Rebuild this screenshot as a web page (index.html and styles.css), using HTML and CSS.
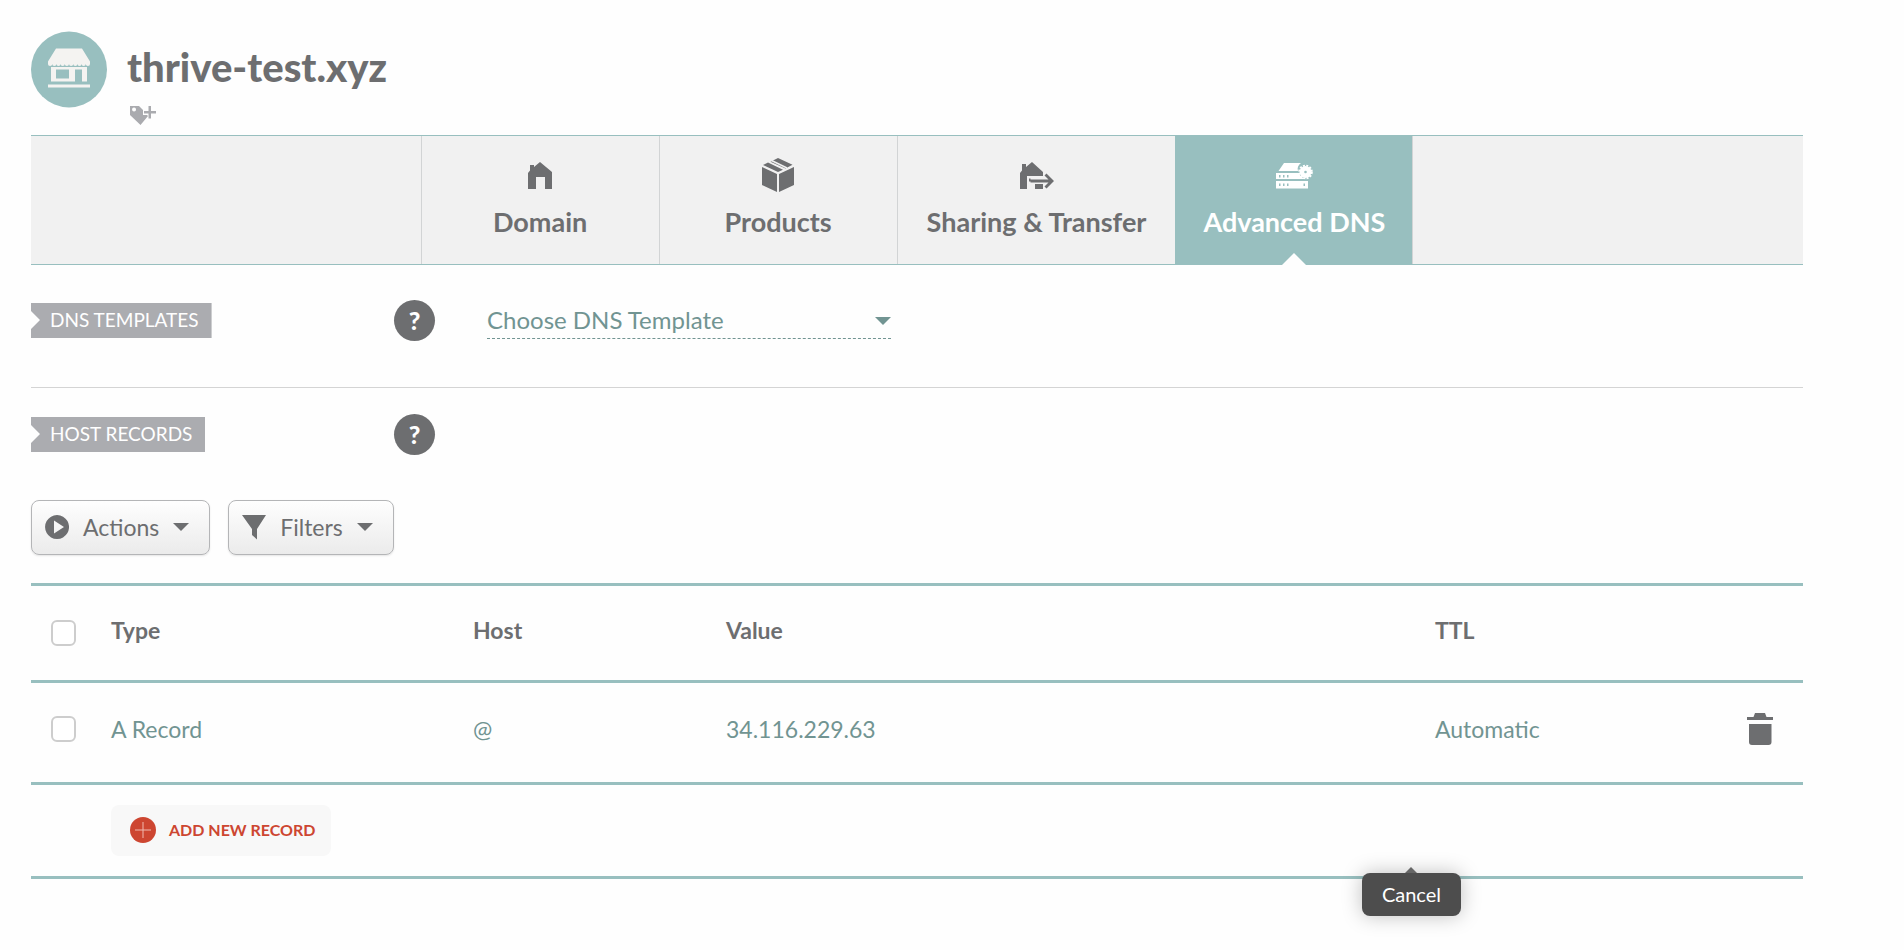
FILE: index.html
```html
<!DOCTYPE html>
<html lang="en">
<head>
    <meta charset="UTF-8">
    <meta name="viewport" content="width=device-width, initial-scale=1.0">
    <title>Advanced DNS - thrive-test.xyz</title>
    <link rel="stylesheet" href="styles.css">
</head>
<body>
    <main class="page">
        <header class="domain-header">
            <svg class="avatar" viewBox="0 0 76 76" aria-hidden="true">
                <circle cx="38" cy="38" r="38" fill="#98bfbf"/>
                <g fill="#f4f3f1">
                    <path d="M25 17h26l8 13v2.500a2 2 0 0 1-4.200 0a2 2 0 0 1-4.200 0a2 2 0 0 1-4.200 0a2 2 0 0 1-4.200 0a2 2 0 0 1-4.200 0a2 2 0 0 1-4.200 0a2 2 0 0 1-4.200 0a2 2 0 0 1-4.200 0a2 2 0 0 1-4.200 0a2 2 0 0 1-4.200 0V30z"/>
                    <path fill-rule="evenodd" d="M20 35.500h36V50h-5V38h-7v12H20zM25 38v9h13v-9z"/>
                    <path d="M17 53h42v3H17z"/>
                </g>
            </svg>
            <div class="domain-info">
                <h1>thrive-test.xyz</h1>
                <button class="tag-button" type="button" aria-label="Add tag">
                    <svg width="26" height="20" viewBox="0 0 26 20">
                        <path fill="#aaabaf" fill-rule="evenodd" d="M0 1h9l4 4v5h4l1 1-7.500 9L0 10zM4 2.500a2 2 0 1 0 .1 4a2 2 0 0 0-.1-4z"/>
                        <path fill="#aaabaf" d="M18.500 1h2.500v5h5v2.500h-5v5h-2.500v-5H14V6h4.500z"/>
                    </svg>
                </button>
            </div>
        </header>

        <nav class="tabs">
            <a class="tab" href="#domain">
                <svg width="24" height="34" viewBox="0 0 24 34" fill="currentColor">
                    <path d="M0 15l2-2.500V7h4v2l6-5 12 10v17h-7V19H8v12H0z"/>
                </svg>
                <span>Domain</span>
            </a>
            <a class="tab" href="#products">
                <svg width="32" height="34" viewBox="0 0 32 34" fill="currentColor">
                    <path d="M0 9l15 7v18L0 27zM32 9l-15 7v18l15-7zM1 7l5-2.500 15 7.200-5 2.300zM8.500 3.800L16 0l14.500 6.700-7 3.800z"/>
                    <path d="M9.500 2.500l15.500 7.500" stroke="#f1f1f1" stroke-width="1.500"/>
                </svg>
                <span>Products</span>
            </a>
            <a class="tab" href="#sharing">
                <svg width="34" height="34" viewBox="0 0 34 34" fill="currentColor">
                    <path d="M0 15l2-2.500V6h4v3l6-5 11 10v4H7v13H0z"/>
                    <path d="M9 20.500h1.500v3H9zM15 26h8v5h-8zM10.500 21.500h18l-4-4 2-2L34 23l-7.500 7.500-2-2 4-4h-18z"/>
                </svg>
                <span>Sharing &amp; Transfer</span>
            </a>
            <a class="tab active" href="#dns" aria-current="page">
                <svg width="37" height="34" viewBox="0 0 37 34" fill="currentColor">
                    <path d="M8 5h17c-3 2-4 5-3 8H2.500z"/>
                    <path fill-rule="evenodd" d="M0 15h23c1 3 3 5 7 6H0zM3 17v2.500h1.500V17zM7 17v2.500h1.500V17zM11 17v2.500h1.500V17z"/>
                    <path fill-rule="evenodd" d="M0 23h32v7.500H0zM3 25.500V28h1.500v-2.500zM7 25.500V28h1.500v-2.500zM11 25.500V28h1.500v-2.500zM27.500 25.500V28H29v-2.500z"/>
                    <circle cx="29.500" cy="14" r="6"/>
                    <circle cx="29.500" cy="14" r="6.400" fill="none" stroke="currentColor" stroke-width="1.800" stroke-dasharray="2 1.350"/>
                    <circle cx="29.500" cy="14" r="1.300" fill="#98bfbf"/>
                </svg>
                <span>Advanced DNS</span>
            </a>
        </nav>

        <section class="section">
            <h2 class="ribbon">DNS TEMPLATES</h2>
            <button class="help" type="button" aria-label="Help with DNS templates">?</button>
            <div class="template-select">
                <select aria-label="DNS template">
                    <option>Choose DNS Template</option>
                </select>
                <svg class="caret" width="16" height="8" viewBox="0 0 16 8" fill="currentColor"><path d="M0 0h16L8 8z"/></svg>
            </div>
        </section>

        <section class="section host-section">
            <h2 class="ribbon">HOST RECORDS</h2>
            <button class="help" type="button" aria-label="Help with host records">?</button>
        </section>

        <div class="toolbar">
            <button class="tool-button" type="button">
                <svg width="24" height="26" viewBox="0 0 24 26" fill="currentColor">
                    <path fill-rule="evenodd" d="M12 1a12 12 0 1 0 .1 0zM9 6.500v13l10-6.500z"/>
                </svg>
                Actions
                <svg class="caret" width="16" height="8" viewBox="0 0 16 8" fill="currentColor"><path d="M0 0h16L8 8z"/></svg>
            </button>
            <button class="tool-button" type="button">
                <svg width="24" height="26" viewBox="0 0 24 26" fill="currentColor">
                    <path d="M0 1h24l-9 14v10.500L10 21v-6z"/>
                </svg>
                Filters
                <svg class="caret" width="16" height="8" viewBox="0 0 16 8" fill="currentColor"><path d="M0 0h16L8 8z"/></svg>
            </button>
        </div>

        <div class="records">
            <table>
                <colgroup>
                    <col class="col-check">
                    <col class="col-type">
                    <col class="col-host">
                    <col class="col-value">
                    <col class="col-ttl">
                    <col class="col-remove">
                </colgroup>
                <thead>
                    <tr>
                        <th class="check"><input type="checkbox" aria-label="Select all records"></th>
                        <th>Type</th>
                        <th>Host</th>
                        <th>Value</th>
                        <th>TTL</th>
                        <td></td>
                    </tr>
                </thead>
                <tbody>
                    <tr>
                        <td class="check"><input type="checkbox" aria-label="Select A Record"></td>
                        <td>A Record</td>
                        <td>@</td>
                        <td>34.116.229.63</td>
                        <td>Automatic</td>
                        <td class="remove">
                            <button type="button" aria-label="Remove record">
                                <svg width="26" height="32" viewBox="0 0 26 32" fill="currentColor">
                                    <path d="M0 4h6.500l1.500-4h10l1.500 4H26v3H0zM2 11h22.500v18a3 3 0 0 1-3 3H5a3 3 0 0 1-3-3z"/>
                                </svg>
                            </button>
                        </td>
                    </tr>
                </tbody>
                <tfoot>
                    <tr>
                        <td></td>
                        <td colspan="5">
                            <button class="add-button" type="button">
                                <svg width="26" height="26" viewBox="0 0 26 26">
                                    <circle cx="13" cy="13" r="13" fill="#cd4631"/>
                                    <path d="M13 5v16M5 13h16" stroke="#f0b9b0" stroke-width="1"/>
                                </svg>
                                <span>ADD NEW RECORD</span>
                            </button>
                        </td>
                    </tr>
                </tfoot>
            </table>
            <div class="tooltip" role="tooltip">Cancel</div>
        </div>
    </main>
</body>
</html>
```

FILE: styles.css
```css
* {
    box-sizing: border-box;
}

body {
    margin: 0;
    background-color: #fefefe;
    color: #6d6e70;
    font-family: Lato, 'Open Sans', sans-serif;
    font-size: 23px;
}

button,
select {
    font-family: inherit;
    font-size: inherit;
    color: inherit;
    cursor: pointer;
}

svg {
    display: block;
    flex: none;
}

.page {
    min-height: 100vh;
    padding: 31px 101px 60px 31px;
}

/* Domain name */
.domain-header {
    display: flex;
    align-items: flex-start;
    gap: 20px;
    height: 104px;
}

.avatar {
    width: 76px;
    height: 77px;
}

h1 {
    margin: 10px 0 12px;
    font-size: 40px;
    line-height: 52px;
    font-weight: 900;
}

.tag-button {
    display: block;
    margin-left: 3px;
    padding: 0;
    border: 0;
    background: none;
}

/* Tabs */
.tabs {
    display: flex;
    justify-content: center;
    height: 130px;
    background-color: #f1f1f1;
    border-top: 1px solid #98bfbf;
    border-bottom: 1px solid #98bfbf;
}

.tab {
    position: relative;
    display: flex;
    flex-direction: column;
    align-items: center;
    gap: 12px;
    min-width: 238px;
    padding: 22px 29px 0;
    border-left: 1px solid #d2d4d5;
    color: #6d6e70;
    font-size: 27px;
    line-height: 36px;
    font-weight: bold;
    text-decoration: none;
}

.tab.active {
    padding: 22px 20px 0;
    background-color: #98bfbf;
    border-right: 1px solid #d2d4d5;
    border-left-color: #98bfbf;
    color: white;
}

.tab.active::after {
    content: '';
    position: absolute;
    bottom: -1px;
    left: 50%;
    margin-left: -12px;
    border: 12px solid transparent;
    border-top: 0;
    border-bottom-color: #fefefe;
}

/* Sections */
.section {
    display: grid;
    grid-template-columns: 363px 93px 404px;
    align-items: start;
    justify-items: start;
    padding: 35px 0 46px;
    border-bottom: 1px solid #d4d4d4;
}

.host-section {
    padding: 26px 0 45px;
    border-bottom: 0;
}

.ribbon {
    margin: 3px 0 0;
    padding: 0 13px 2px 19px;
    background-color: #abacb0;
    clip-path: polygon(0 0, 100% 0, 100% 100%, 0 100%, 0 26px, 9px 17px, 0 8px);
    color: white;
    font-size: 19px;
    line-height: 33px;
    font-weight: normal;
}

.help {
    width: 41px;
    height: 41px;
    padding: 0;
    border: 0;
    border-radius: 50%;
    background-color: #6d6e70;
    color: white;
    font-size: 25px;
    font-weight: 900;
    line-height: 41px;
}

.template-select {
    position: relative;
    width: 100%;
    color: #719492;
    font-size: 24px;
}

.template-select select {
    display: block;
    width: 100%;
    height: 39px;
    padding: 0 24px 0 0;
    border: 0;
    border-bottom: 1px dashed #719492;
    appearance: none;
    background: none;
}

.template-select .caret {
    position: absolute;
    top: 17px;
    right: 0;
    pointer-events: none;
}

/* Actions and Filters */
.toolbar {
    display: flex;
    gap: 18px;
    margin-bottom: 28px;
}

.tool-button {
    display: flex;
    align-items: center;
    gap: 14px;
    height: 55px;
    padding: 0 20px 2px 13px;
    border: 1px solid #b4b5b7;
    border-radius: 8px;
    background: linear-gradient(#fefefe, #ebebeb);
    box-shadow: 0 1px 2px rgba(0, 0, 0, 0.1);
}

/* Host records */
.records {
    position: relative;
}

table {
    width: 100%;
    border-collapse: collapse;
    table-layout: fixed;
    border-top: 3px solid #98bfbf;
}

tr {
    border-bottom: 3px solid #98bfbf;
}

th,
td {
    padding: 0 0 7px;
    text-align: left;
}

.col-check { width: 80px; }
.col-type { width: 362px; }
.col-host { width: 253px; }
.col-ttl { width: 270px; }
.col-remove { width: 98px; }

thead tr {
    height: 97px;
}

tbody tr {
    height: 102px;
    color: #719492;
}

tfoot tr {
    height: 94px;
}

.check {
    padding-left: 20px;
}

thead .check {
    padding-bottom: 0;
}

input[type="checkbox"] {
    display: block;
    width: 25px;
    height: 26px;
    margin: 0;
    border: 2px solid #cdcdcd;
    border-radius: 6px;
    appearance: none;
    background-color: white;
}

.remove button {
    display: block;
    margin-left: auto;
    margin-right: 30px;
    padding: 0;
    border: 0;
    background: none;
    color: #6d6e70;
}

tfoot td {
    padding-bottom: 0;
}

.add-button {
    display: flex;
    align-items: center;
    gap: 13px;
    height: 51px;
    padding: 0 16px 2px 19px;
    border: 0;
    border-radius: 8px;
    background-color: #f8f8f8;
    color: #cd4631;
    font-size: 16px;
    font-weight: bold;
}

.tooltip {
    position: absolute;
    right: 342px;
    bottom: -37px;
    padding: 0 20px;
    border-radius: 8px;
    background-color: #4d4d4d;
    box-shadow: 0 0 20px rgba(0, 0, 0, 0.25);
    color: white;
    font-size: 20px;
    line-height: 43px;
}

.tooltip::before {
    content: '';
    position: absolute;
    bottom: 100%;
    left: 50%;
    margin-left: -6px;
    border: 6px solid transparent;
    border-top: 0;
    border-bottom-color: #666;
}
```
